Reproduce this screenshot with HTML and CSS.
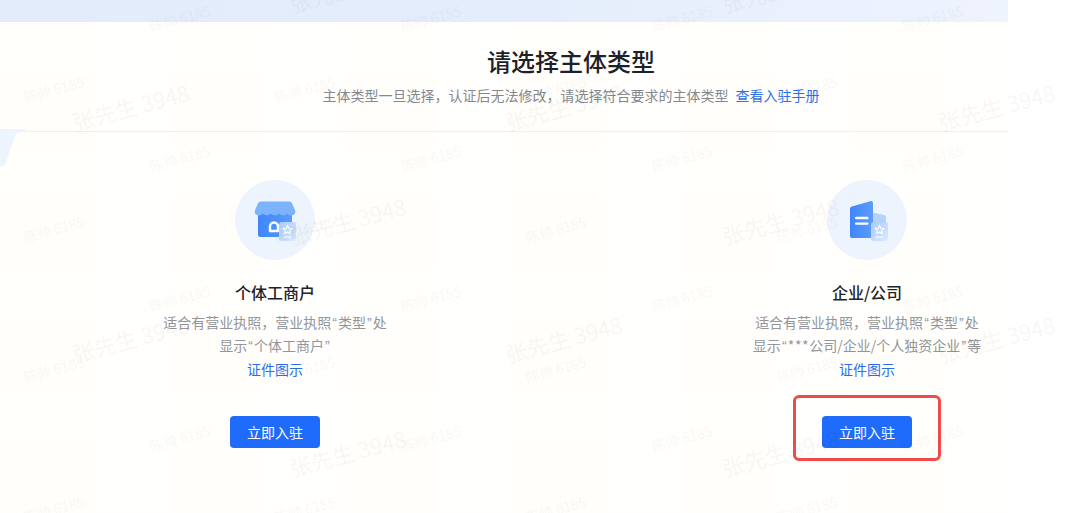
FILE: index.html
```html
<!DOCTYPE html>
<html lang="zh-CN">
<head>
<meta charset="utf-8">
<title>请选择主体类型</title>
<link rel="stylesheet" href="styles.css">
</head>
<body>
<main class="page">
  <div class="banner"></div>
  <header class="head">
    <h1 class="title">请选择主体类型</h1>
    <p class="sub">主体类型一旦选择，认证后无法修改，请选择符合要求的主体类型<a class="link sub-link">查看入驻手册</a></p>
  </header>
  <div class="corner"></div>
  <section class="cards">
    <article class="card">
      <svg class="icon" viewBox="0 0 80 80">
        <defs>
          <linearGradient id="bodyA" x1="0" y1="0" x2="1" y2="0"><stop offset="0" stop-color="#3f86fb"/><stop offset="1" stop-color="#5a9bfb"/></linearGradient>
          <linearGradient id="badgeA" x1="0" y1="0" x2="1" y2="1"><stop offset="0" stop-color="#a8cafa"/><stop offset="1" stop-color="#dceafd"/></linearGradient>
        </defs>
        <circle cx="40" cy="40" r="40" fill="#edf4fe"/>
        <rect x="23" y="30" width="34" height="27" rx="2.500" fill="url(#bodyA)"/>
        <path d="M26 21.500h28c1.600 0 2.700.8 3.200 2.200L60 30c.8 2.300.2 4.200-1.600 5-2.300 1-4.600.5-6.100-1.500-2.200 2.400-5.900 2.400-8 0-2.200 2.400-6.300 2.400-8.500 0-2.100 2.400-5.800 2.400-8 0-1.500 2-3.800 2.500-6.100 1.500-1.800-.8-2.400-2.700-1.600-5l2.800-6.300c.5-1.400 1.600-2.200 3.100-2.200z" fill="#7db3fa"/>
        <path d="M35 51v-4.500a4 4 0 0 1 8 0V51z" fill="none" stroke="#fff" stroke-width="2.400" stroke-linejoin="round"/>
        <rect x="44" y="42" width="17" height="19" rx="2.500" fill="url(#badgeA)"/>
        <path d="M52.500 45.500l1.300 2.700 2.900.4-2.100 2 .5 2.900-2.600-1.400-2.600 1.400.5-2.900-2.100-2 2.900-.4z" fill="none" stroke="#fff" stroke-width="1.100"/>
        <rect x="48.500" y="56.500" width="8" height="1.200" fill="#fff" opacity=".9"/>
      </svg>
      <h2 class="name">个体工商户</h2>
      <p class="desc">适合有营业执照，营业执照<span class="q">“</span>类型<span class="q">”</span>处<br>显示<span class="q">“</span>个体工商户<span class="q">”</span></p>
      <a class="link proof">证件图示</a>
      <div class="action"><button class="btn" type="button">立即入驻</button></div>
    </article>
    <article class="card">
      <svg class="icon" viewBox="0 0 80 80">
        <defs>
          <linearGradient id="docA" x1="0" y1="0" x2="1" y2="0"><stop offset="0" stop-color="#3f86fb"/><stop offset="1" stop-color="#5c9dfb"/></linearGradient>
          <linearGradient id="badgeB" x1="0" y1="0" x2="1" y2="1"><stop offset="0" stop-color="#a8cafa"/><stop offset="1" stop-color="#dceafd"/></linearGradient>
        </defs>
        <circle cx="40" cy="40" r="40" fill="#edf4fe"/>
        <path d="M46 32.500l11 2.500c1.300.3 2 1 2 2.500V50H46z" fill="#b4d2fb"/>
        <path d="M25 26.500 44 21c1.200-.3 2 .6 2 2v33c0 1.200-.8 2-2 2H25c-1.200 0-2-.8-2-2V29c0-1.300.8-2.200 2-2.500z" fill="url(#docA)"/>
        <rect x="28" y="36.800" width="13.500" height="2.400" rx="1.200" fill="#fff"/>
        <rect x="28" y="42.400" width="13.500" height="2.400" rx="1.200" fill="#fff"/>
        <rect x="44" y="42" width="17" height="19" rx="2.500" fill="url(#badgeB)"/>
        <path d="M52.500 45.500l1.300 2.700 2.900.4-2.100 2 .5 2.900-2.600-1.400-2.600 1.400.5-2.900-2.100-2 2.900-.4z" fill="none" stroke="#fff" stroke-width="1.100"/>
        <rect x="48.500" y="56.500" width="8" height="1.200" fill="#fff" opacity=".9"/>
      </svg>
      <h2 class="name">企业/公司</h2>
      <p class="desc">适合有营业执照，营业执照<span class="q">“</span>类型<span class="q">”</span>处<br>显示<span class="q">“</span><span class="wide">***</span>公司/企业/个人独资企业<span class="q">”</span>等</p>
      <a class="link proof">证件图示</a>
      <div class="action"><button class="btn" type="button">立即入驻</button><span class="mark"></span></div>
    </article>
  </section>
</main>
<svg class="wm wm-small" aria-hidden="true">
  <defs>
    <pattern id="wmSmall" width="251" height="140" patternUnits="userSpaceOnUse">
      <text x="54" y="95" text-anchor="middle" transform="rotate(-15 54 90)">陈帅 6185</text>
      <text x="180" y="24" text-anchor="middle" transform="rotate(-15 180 19)">陈帅 6185</text>
    </pattern>
  </defs>
  <rect width="100%" height="100%" fill="url(#wmSmall)"/>
</svg>
<svg class="wm wm-large" aria-hidden="true">
  <defs>
    <pattern id="wmLarge" width="433" height="232" y="60" patternUnits="userSpaceOnUse">
      <text x="131" y="56" text-anchor="middle" transform="rotate(-15 131 48)">张先生 3948</text>
      <text x="348" y="170" text-anchor="middle" transform="rotate(-15 348 162)">张先生 3948</text>
    </pattern>
  </defs>
  <rect width="100%" height="100%" fill="url(#wmLarge)"/>
</svg>
</body>
</html>
```
FILE: styles.css
```css
* { box-sizing: border-box; }
html, body { margin: 0; padding: 0; height: 513px; overflow: hidden; background: #fff; }
body {
  position: relative;
  font-family: "Noto Sans CJK SC", "Liberation Sans", sans-serif;
  color: #1f2329;
}
.page {
  position: relative;
  width: 1008px;
  height: 513px;
  background:
    repeating-linear-gradient(90deg, rgba(255, 252, 232, .1) 0 96px, rgba(255, 255, 255, 0) 96px 170px),
    repeating-linear-gradient(0deg, rgba(255, 252, 232, .08) 0 70px, rgba(255, 255, 255, 0) 70px 122px),
    #fffffe;
}
.banner {
  height: 22px;
  background: linear-gradient(90deg, #e2ecfb 0%, #e3edfb 50%, #e9f0fc 72%, #eef3fe 100%);
}
.head {
  height: 110px;
  padding: 23px 0 0 134px;
  text-align: center;
  border-bottom: 1px solid #eeeff0;
}
.title {
  margin: 0;
  font-size: 24px;
  line-height: 32px;
  font-weight: 500;
  color: #1d2129;
}
.sub {
  margin: 8px 0 0;
  font-size: 14px;
  line-height: 20px;
  color: #85898f;
}
.link { color: #2c6fe8; }
.sub-link { margin-left: 7px; }
.corner {
  position: absolute;
  left: 0;
  top: 129px;
  width: 25px;
  height: 38px;
  background: #edf4fe;
  clip-path: polygon(0 0, 100% 0, 100% 6%, 64% 12%, 20% 95%, 0 100%);
}
.cards {
  display: grid;
  grid-template-columns: 400px 400px;
  column-gap: 192px;
  padding: 48px 0 0 75px;
}
.card {
  display: flex;
  flex-direction: column;
  align-items: center;
  text-align: center;
}
.icon { display: block; width: 80px; height: 80px; }
.name {
  margin: 20px 0 0;
  font-size: 16px;
  line-height: 24px;
  font-weight: 500;
  color: #1f2329;
}
.desc {
  margin: 7px 0 0;
  font-size: 14px;
  line-height: 22px;
  color: #92969b;
}
.q {
  font-family: "Liberation Sans", sans-serif;
  margin: 0 1.100px;
}
.wide { letter-spacing: .7px; }
.proof {
  margin-top: 1px;
  font-size: 14px;
  line-height: 22px;
}
.action {
  position: relative;
  margin-top: 36px;
}
.btn {
  display: block;
  width: 90px;
  height: 32px;
  padding: 0;
  border: 0;
  border-radius: 4px;
  background: #1f6bfb;
  color: #fff;
  font: inherit;
  font-size: 14px;
  line-height: 32px;
}
.mark {
  position: absolute;
  left: -29px;
  top: -21px;
  width: 148px;
  height: 66px;
  border: 3px solid #f04b4b;
  border-radius: 6px;
}
.wm {
  position: absolute;
  left: 0;
  top: 0;
  height: 513px;
  pointer-events: none;
  filter: blur(.5px);
}
.wm text { fill: #000; }
.wm-small { width: 1008px; }
.wm-small text { font-size: 14px; opacity: .028; }
.wm-large { width: 1080px; }
.wm-large text { font-size: 22px; opacity: .032; }
```
